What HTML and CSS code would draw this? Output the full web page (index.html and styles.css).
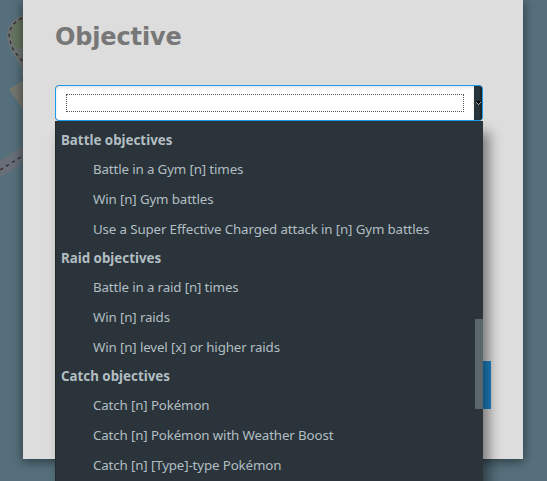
FILE: index.html
```
<!DOCTYPE html>
<html lang="en">
<head>
<meta charset="utf-8">
<title>Objective</title>
<link rel="stylesheet" href="styles.css">
</head>
<body>
<svg class="map" viewBox="0 0 40 190" aria-hidden="true">
  <path d="M40 13Q29 13 20 16Q8 22 7 35Q8 48 16 58L22 70L21 76L40 87Z" fill="#6d7574"/>
  <path d="M40 14Q27 15 20 19Q10 25 11 36Q12 44 17 49L40 35Z" fill="#65745f"/>
  <path d="M9 89L40 71V135L23 110Z" fill="#75766e"/>
  <path d="M-8 174L40 144" fill="none" stroke="#686f78" stroke-width="15"/>
  <path d="M22 18Q11 23 9 34Q10 44 14 51L24 63" fill="none" stroke="#382d32" stroke-width="1.4" stroke-dasharray="3.5 3.5"/>
  <path d="M0 170L24 155" fill="none" stroke="#382d32" stroke-width="1.4" stroke-dasharray="3.5 3.5"/>
</svg>
<main class="dialog">
  <h1 class="title">Objective</h1>
  <div class="select">
    <div class="field"><div class="focus"></div></div>
    <div class="arrow"><svg viewBox="0 0 5 4" shape-rendering="crispEdges"><path d="M0 0H4V2H3V3H2V2H1V1H0Z" fill="#000"/><path d="M0 1H1V2H0ZM1 2H2V3H1ZM2 3H3V4H2ZM3 2H4V3H3ZM4 1H5V2H4Z" fill="#a4a8aa"/></svg></div>
    <div class="menu">
      <div class="group">Battle objectives</div>
      <div class="option">Battle in a Gym [n] times</div>
      <div class="option">Win [n] Gym battles</div>
      <div class="option">Use a Super Effective Charged attack in [n] Gym battles</div>
      <div class="group">Raid objectives</div>
      <div class="option">Battle in a raid [n] times</div>
      <div class="option">Win [n] raids</div>
      <div class="option">Win [n] level [x] or higher raids</div>
      <div class="group">Catch objectives</div>
      <div class="option">Catch [n] Pokémon</div>
      <div class="option">Catch [n] Pokémon with Weather Boost</div>
      <div class="option">Catch [n] [Type]-type Pokémon</div>
      <div class="thumb"></div>
    </div>
  </div>
  <div class="submit"></div>
</main>
</body>
</html>
```
FILE: styles.css
```
* { box-sizing: border-box; }
body {
  margin: 0;
  height: 481px;
  overflow: hidden;
  background: #55707c;
}
.map {
  position: absolute;
  left: 0;
  top: 0;
  width: 40px;
  height: 190px;
}
.dialog {
  position: relative;
  width: 500px;
  height: 459px;
  margin-left: 23px;
  padding: 21px 32px 0;
  background: #ddd;
  box-shadow: 0 2px 10px 1px rgba(0, 0, 0, .45);
}
.title {
  margin: 0 0 32px;
  font: bold 24px/32px "DejaVu Sans", sans-serif;
  letter-spacing: -.15px;
  color: #777;
}
.select {
  position: relative;
  display: flex;
  width: 428px;
  height: 36px;
  border: 1px solid #1a9cec;
  border-radius: 4px;
  background: #27343a;
}
.field {
  flex: 1;
  padding: 8px 10px;
  border-radius: 3px 0 0 3px;
  background: #fff;
  box-shadow: inset 0 2px 3px rgba(0, 0, 0, .1);
}
.focus {
  height: 18px;
  border: 1px dotted #555;
}
.arrow {
  width: 8px;
  padding: 15px 0 0 2px;
  border-right: 2px solid #1c272c;
  border-radius: 0 3px 3px 0;
}
.arrow svg {
  display: block;
  width: 5px;
  height: 4px;
  overflow: visible;
}
.menu {
  position: absolute;
  z-index: 1;
  left: -1px;
  top: 35px;
  width: 428px;
  height: 380px;
  padding-top: 5px;
  background: #2a343a;
  box-shadow: 6px 11px 12px rgba(0, 0, 0, .45), inset 1px 0 #202a2f;
  font: 13.333px "Noto Sans", sans-serif;
  color: #b2bec2;
}
.group {
  height: 28px;
  padding-left: 6px;
  line-height: 28px;
  font-weight: bold;
}
.option {
  height: 30px;
  padding-left: 38px;
  line-height: 30px;
  letter-spacing: -.14px;
}
.thumb {
  position: absolute;
  right: 0;
  top: 198px;
  width: 8px;
  height: 90px;
  background: #5a666b;
}
.submit {
  width: 436px;
  height: 48px;
  margin-top: 240px;
  background: #2086cc;
}
```
